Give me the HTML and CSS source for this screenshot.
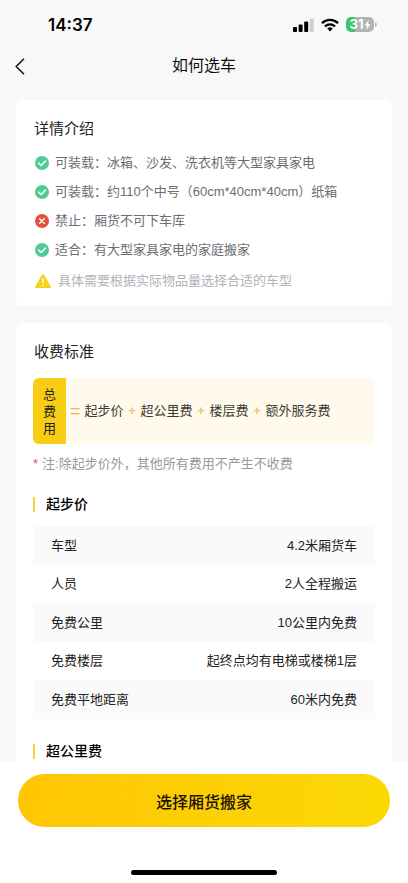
FILE: index.html
```html
<!DOCTYPE html>
<html lang="zh-CN">
<head>
<meta charset="utf-8">
<meta name="viewport" content="width=device-width, initial-scale=1">
<title>如何选车</title>
<link rel="stylesheet" href="styles.css">
</head>
<body>
<svg class="sprite" aria-hidden="true">
  <symbol id="ok" viewBox="0 0 14 14">
    <circle cx="7" cy="7" r="7" fill="#50cb93"/>
    <path d="M3.6 7.1 6.2 9.5 10.5 5" fill="none" stroke="#fff" stroke-width="1.5" stroke-linecap="round" stroke-linejoin="round"/>
  </symbol>
  <symbol id="no" viewBox="0 0 14 14">
    <circle cx="7" cy="7" r="7" fill="#e2503f"/>
    <path d="M4.7 4.7 9.3 9.3M9.3 4.7 4.7 9.3" fill="none" stroke="#fff" stroke-width="1.5" stroke-linecap="round"/>
  </symbol>
</svg>
<div class="page">
  <div class="status">
    <span class="time">14:37</span>
    <div class="indicators">
      <svg class="signal" viewBox="0 0 21 14" aria-hidden="true">
        <rect x="0" y="9" width="4" height="5" rx="1"/>
        <rect x="5.6" y="6.5" width="4" height="7.5" rx="1"/>
        <rect x="11.2" y="3.5" width="4" height="10.5" rx="1"/>
        <rect x="16.8" y="0.5" width="4" height="13.5" rx="1" fill="#cfcfcf"/>
      </svg>
      <svg class="wifi" viewBox="0 0 18 14" aria-hidden="true">
        <g fill="none" stroke="#000" stroke-width="2.4">
          <path d="M1 5.2a11.4 11.4 0 0 1 16 0"/>
          <path d="M4 8.5a7 7 0 0 1 10 0"/>
        </g>
        <path d="M9 13.4 6.2 10.6a4 4 0 0 1 5.6 0z"/>
      </svg>
      <div class="battery">
        <span class="level">31</span>
        <svg class="bolt" viewBox="0 0 7 10" aria-hidden="true"><path d="M4.8 0 .3 5.6h2.6L2 10 6.7 4.3H4z" fill="#fff"/></svg>
      </div>
      <svg class="nub" viewBox="0 0 2 5" aria-hidden="true"><path d="M0 0a2.6 2.6 0 0 1 0 5z" fill="#b3b3b3"/></svg>
    </div>
  </div>
  <header class="nav">
    <button class="back" type="button" aria-label="返回">
      <svg viewBox="0 0 10 17" aria-hidden="true"><path d="M9 .8 1.2 8.5 9 16.2" fill="none" stroke="#111" stroke-width="1.5"/></svg>
    </button>
    <h1 class="nav-title">如何选车</h1>
  </header>
  <main class="content">
    <section class="card intro">
      <h2 class="card-title">详情介绍</h2>
      <ul class="features">
        <li><svg class="mark" aria-hidden="true"><use href="#ok"/></svg>可装载：冰箱、沙发、洗衣机等大型家具家电</li>
        <li><svg class="mark" aria-hidden="true"><use href="#ok"/></svg>可装载：约110个中号（60cm*40cm*40cm）纸箱</li>
        <li><svg class="mark" aria-hidden="true"><use href="#no"/></svg>禁止：厢货不可下车库</li>
        <li><svg class="mark" aria-hidden="true"><use href="#ok"/></svg>适合：有大型家具家电的家庭搬家</li>
      </ul>
      <p class="tip">
        <svg class="warn" viewBox="0 0 16 14" aria-hidden="true"><path d="M8 1 15 13H1z" fill="#f7d11e" stroke="#f7d11e" stroke-width="2" stroke-linejoin="round"/><path d="M8 4.5v4.5M8 10.5v1.5" stroke="#fff" stroke-width="1.5"/></svg>
        具体需要根据实际物品量选择合适的车型
      </p>
    </section>
    <section class="card">
      <h2 class="card-title">收费标准</h2>
      <div class="formula">
        <div class="total">总费用</div>
        <div class="terms">
          <i class="equals">=</i><span>起步价</span><i>+</i><span>超公里费</span><i>+</i><span>楼层费</span><i>+</i><span>额外服务费</span>
        </div>
      </div>
      <p class="note"><span class="star">*</span>注:除起步价外，其他所有费用不产生不收费</p>
      <h3 class="subtitle">起步价</h3>
      <table class="fees">
        <tr><th scope="row">车型</th><td>4.2米厢货车</td></tr>
        <tr><th scope="row">人员</th><td>2人全程搬运</td></tr>
        <tr><th scope="row">免费公里</th><td>10公里内免费</td></tr>
        <tr><th scope="row">免费楼层</th><td>起终点均有电梯或楼梯1层</td></tr>
        <tr><th scope="row">免费平地距离</th><td>60米内免费</td></tr>
      </table>
      <h3 class="subtitle">超公里费</h3>
    </section>
  </main>
  <footer class="footer">
    <button class="submit" type="button">选择厢货搬家</button>
    <div class="home"></div>
  </footer>
</div>
</body>
</html>
```
FILE: styles.css
```css
* {
  box-sizing: border-box;
}

body,
h1,
h2,
h3,
p,
ul {
  margin: 0;
  padding: 0;
}

body {
  font-family: "Liberation Sans", "Noto Sans CJK SC", sans-serif;
  font-size: 13px;
  line-height: 20px;
  color: #222;
  background: #f8f8f8;
}

button {
  border: 0;
  padding: 0;
  font-family: inherit;
  cursor: pointer;
}

.sprite {
  display: none;
}

.page {
  display: flex;
  flex-direction: column;
  height: 100vh;
}

.status {
  display: flex;
  flex: none;
  justify-content: space-between;
  align-items: center;
  height: 48px;
  padding: 1px 31px 0 48px;
}

.time {
  font-family: Inter, sans-serif;
  font-size: 17px;
  font-weight: 600;
  color: #000;
}

.indicators {
  display: flex;
  align-items: center;
}

.signal {
  width: 21px;
  height: 14px;
  margin-right: 7px;
}

.wifi {
  width: 18px;
  height: 14px;
  margin-right: 7px;
}

.battery {
  display: flex;
  align-items: center;
  justify-content: center;
  width: 28px;
  height: 15px;
  border-radius: 5px;
  background: linear-gradient(90deg, #3cc465 32%, #b3b3b3 32%);
}

.level {
  font-family: Inter, sans-serif;
  font-size: 13px;
  font-weight: 700;
  line-height: 15px;
  color: #fff;
}

.bolt {
  width: 7px;
  height: 10px;
}

.nub {
  width: 2px;
  height: 5px;
  margin-left: 1px;
}

.nav {
  display: grid;
  flex: none;
  grid-template-columns: 48px 1fr 48px;
  align-items: center;
  height: 36px;
}

.back {
  display: flex;
  align-items: center;
  height: 36px;
  padding-left: 15px;
  background: none;
}

.back svg {
  width: 10px;
  height: 17px;
}

.nav-title {
  font-size: 16px;
  font-weight: 400;
  line-height: 26px;
  text-align: center;
  color: #111;
}

.content {
  flex: 1;
  min-height: 0;
  overflow: hidden;
  padding: 16px 16px 0;
}

.card {
  padding: 17px 17px 15px;
  border-radius: 6px;
  background: #fff;
}

.card + .card {
  margin-top: 17px;
}

.card-title {
  padding-left: 1px;
  font-size: 15px;
  font-weight: 400;
  line-height: 24px;
}

.features {
  margin-top: 7px;
  padding-left: 2px;
  list-style: none;
  color: #6b6e73;
}

.features li {
  display: flex;
  align-items: center;
  gap: 6px;
  line-height: 29px;
}

.mark {
  width: 14px;
  height: 14px;
}

.tip {
  display: flex;
  align-items: center;
  gap: 7px;
  margin-top: 7px;
  padding-left: 2px;
  color: #b0b3ba;
}

.warn {
  width: 16px;
  height: 14px;
}

.formula {
  display: flex;
  margin-top: 14px;
  border-radius: 6px;
  overflow: hidden;
  background: #fffaec;
}

.total {
  flex: none;
  width: 33px;
  padding: 8px 10px 7px;
  line-height: 17px;
  background: #f9cd14;
}

.terms {
  display: flex;
  align-items: center;
  gap: 4px;
  padding-left: 4px;
  white-space: nowrap;
  color: #3c3a35;
}

.terms i {
  min-width: 9px;
  font-style: normal;
  font-weight: 700;
  text-align: center;
  color: #ecc670;
}

.terms .equals {
  font-size: 18px;
  font-weight: 400;
  color: #f0b840;
}

.note {
  margin-top: 10px;
  color: #999;
}

.star {
  margin-right: 4px;
  color: #e2503f;
}

.subtitle {
  display: flex;
  align-items: center;
  gap: 11px;
  margin-top: 20px;
  font-size: 14px;
  font-weight: 500;
  color: #000;
}

.subtitle::before {
  content: "";
  width: 2px;
  height: 15px;
  background: #f5d33d;
}

.fees {
  width: 100%;
  margin-top: 12px;
  border-collapse: collapse;
}

.fees + .subtitle {
  margin-top: 22px;
}

.fees th,
.fees td {
  height: 38px;
  padding: 0 18px;
  font-weight: 400;
}

.fees th {
  text-align: left;
}

.fees td {
  text-align: right;
}

.fees tr:nth-child(odd) {
  background: #fafafa;
}

.fees tr:nth-child(odd) > * {
  height: 39px;
}

.footer {
  display: flex;
  flex: none;
  flex-direction: column;
  align-items: center;
  padding: 13px 18px 8px;
  background: #fff;
}

.submit {
  width: 100%;
  height: 53px;
  border-radius: 27px;
  font-size: 16px;
  font-weight: 500;
  color: #201004;
  background: linear-gradient(100deg, #ffc504, #fad904);
}

.home {
  width: 146px;
  height: 5px;
  margin-top: 43px;
  border-radius: 3px;
  background: #000;
}
```
